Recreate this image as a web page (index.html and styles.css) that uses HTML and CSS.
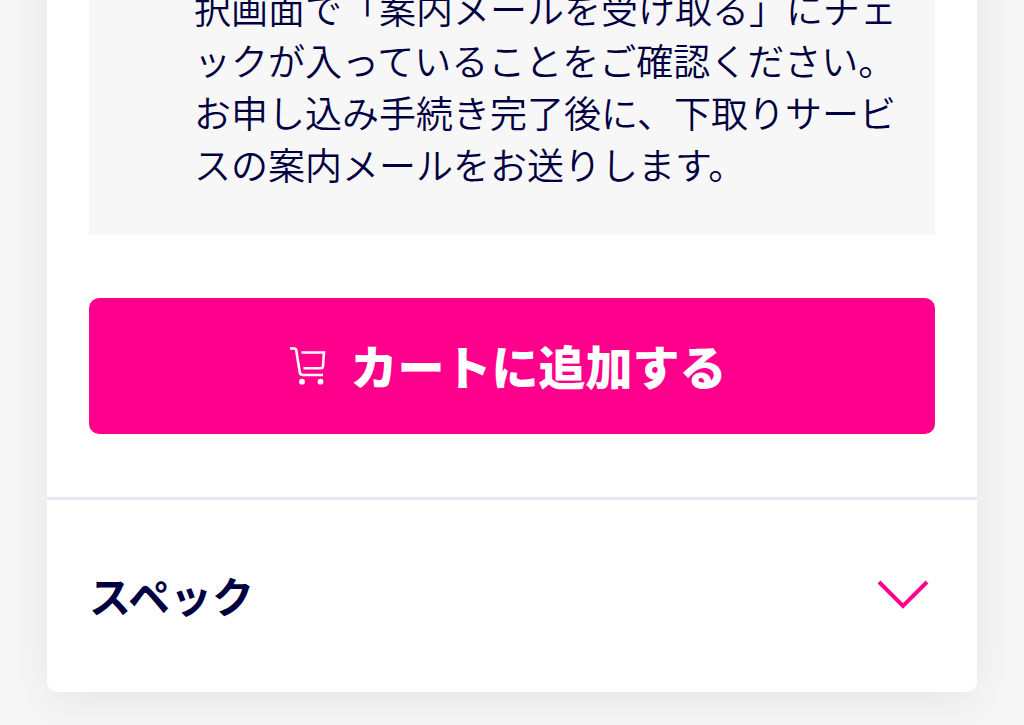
FILE: index.html
```
<!DOCTYPE html>
<html lang="ja">
    <head>
        <meta charset="UTF-8">
        <meta name="viewport" content="width=device-width, initial-scale=1">
        <title>カートに追加する</title>
        <link rel="stylesheet" href="styles.css">
    </head>
    <body>
        <main class="card">
            <section class="purchase">
                <div class="note">
                    <p class="note-text">択画面で「案内メールを受け取る」にチェックが入っていることをご確認ください。<br>お申し込み手続き完了後に、下取りサービスの案内メールをお送りします。</p>
                </div>
                <button type="button" class="cart-button">
                    <svg class="cart-icon" viewBox="0 0 37 40" aria-hidden="true">
                        <path d="M0 3.5H4Q6 3.5 6.3 5.5L9.7 27Q10.2 30 13 30H33" fill="none" stroke="#fff" stroke-width="2.6"/>
                        <path d="M11.5 7.5H34L33 21Q32.8 23.3 30.8 23.3H13.5" fill="none" stroke="#fff" stroke-width="2.6"/>
                        <circle cx="12" cy="36.7" r="2.9" fill="#fff"/>
                        <circle cx="30.5" cy="36.7" r="2.9" fill="#fff"/>
                    </svg>
                    <span>カートに追加する</span>
                </button>
            </section>
            <button type="button" class="accordion" aria-expanded="false">
                <span>スペック</span>
                <svg class="chevron" viewBox="0 0 52 30" aria-hidden="true">
                    <path d="M2 2L26 26L50 2" fill="none" stroke="#ff008c" stroke-width="4"/>
                </svg>
            </button>
        </main>
    </body>
</html>
```

FILE: styles.css
```
* {
    box-sizing: border-box;
}

body {
    display: flex;
    flex-direction: column;
    justify-content: flex-end;
    height: 100vh;
    margin: 0;
    padding: 0 47px 33px;
    overflow: hidden;
    background: #f7f7f7;
    color: #000040;
    font-family: "Noto Sans CJK JP", sans-serif;
}

button {
    font-family: inherit;
    border: 0;
    cursor: pointer;
}

.card {
    flex-shrink: 0;
    background: #fff;
    border-radius: 10px;
    box-shadow: 0 10px 50px rgba(0, 0, 0, 0.08);
}

.purchase {
    padding: 42px 42px 63px;
    border-bottom: 3px solid #e6e6f0;
}

/* 下取りサービスの案内 */
.note {
    margin-bottom: 63px;
    padding: 42px 36px 45px 105px;
    background: #f7f7f7;
}

.note-text {
    margin: 0;
    font-size: 37px;
    font-weight: 350;
    line-height: 52px;
}

.cart-button {
    display: flex;
    align-items: center;
    justify-content: center;
    gap: 24px;
    width: 100%;
    padding: 32px 8px 34px 0;
    border-radius: 10px;
    background: #ff008c;
    color: #fff;
    font-size: 47px;
    font-weight: 900;
    line-height: 70px;
}

.cart-icon {
    width: 37px;
    height: 40px;
}

/* スペック */
.accordion {
    display: flex;
    align-items: center;
    justify-content: space-between;
    width: 100%;
    padding: 63px 48px 65px 42px;
    border-radius: 0 0 10px 10px;
    background: none;
    color: inherit;
    font-size: 42px;
    font-weight: 700;
    line-height: 64px;
}

.chevron {
    width: 52px;
    height: 30px;
}
```
